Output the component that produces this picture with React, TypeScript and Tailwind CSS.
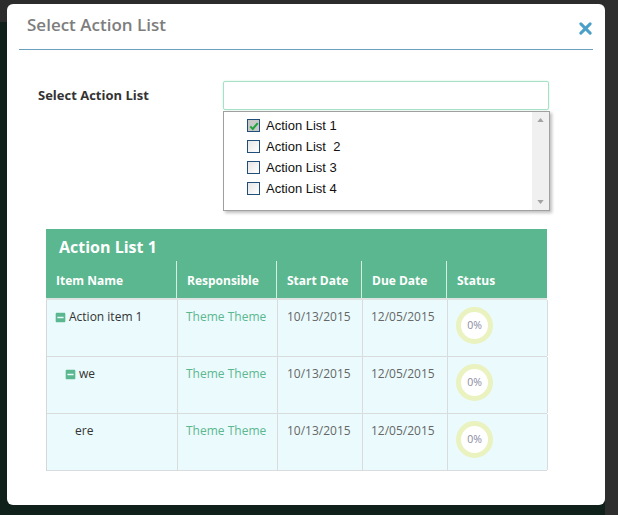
import { FaMinusSquare } from "react-icons/fa";

const lists = ["Action List 1", "Action List  2", "Action List 3", "Action List 4"];

const rows = [
  { name: "Action item 1", indent: 0, icon: true },
  { name: "we", indent: 10, icon: true },
  { name: "ere", indent: 20, icon: false },
];

const Checkbox = ({ checked }: { checked: boolean }) => (
  <span
    className={
      "flex h-[13px] w-[13px] items-center justify-center border border-[#1f4e79] " +
      (checked ? "bg-[#c8c8c8]" : "bg-gradient-to-br from-[#e6e6e6] to-white")
    }
  >
    {checked && (
      <svg viewBox="0 0 12 12" className="h-[10px] w-[10px]">
        <path d="M1.5 6.5 L4.5 9.5 L10.5 2.5" fill="none" stroke="#1fa33a" strokeWidth="2.4" />
      </svg>
    )}
  </span>
);

const Ring = () => (
  <div className="flex h-[37px] w-[37px] items-center justify-center rounded-full border-[5px] border-[#eaf2c0] bg-white">
    <span className="text-[10.5px] text-[#8a8aa0]">0%</span>
  </div>
);

export default function App() {
  return (
    <div className="h-[515px] w-[618px] overflow-hidden bg-[linear-gradient(to_right,transparent_605px,#2e2e2e_605px),linear-gradient(to_bottom,#2c2c2c_0px,#2c2c2c_22px,#10201a_22px)] pl-[7px] pt-[4px] font-['Open_Sans',sans-serif]">
      <div className="h-[501px] w-[598px] rounded-[6px] bg-white">
        {/* Header */}
        <div className="mx-[12px] flex h-[46px] items-center justify-between border-b border-[#6a9fc0] pb-[4px] pl-[8px] pr-[1px]">
          <h2 className="text-[17px] font-semibold text-[#7d7d7d]">Select Action List</h2>
          <svg viewBox="0 0 14 14" className="mt-[7px] h-[13px] w-[13px]">
            <path d="M2 2 L12 12 M12 2 L2 12" stroke="#4c9fc8" strokeWidth="3.2" strokeLinecap="round" />
          </svg>
        </div>

        {/* Select row */}
        <div className="mt-[31px] flex pl-[31px]">
          <div className="flex h-[29px] w-[185px] items-center text-[13px] font-bold text-[#333]">
            Select Action List
          </div>
          <div className="flex flex-col">
            <div className="h-[29px] w-[326px] rounded-[2px] border border-[#a6e0c6] shadow-[0_0_2px_#c6f0dc]" />
            <div className="mt-[1px] flex h-[100px] w-[327px] border border-[#a0a0a0] bg-white shadow-[2px_2px_3px_rgba(0,0,0,0.25)] font-['Liberation_Sans',sans-serif]">
              <div className="flex flex-1 flex-col pl-[23px] pt-[3px]">
                {lists.map((l, i) => (
                  <div key={l} className="flex h-[21px] items-center gap-[6px] text-[13px] text-[#111]">
                    <Checkbox checked={i === 0} />
                    <span className="whitespace-pre">{l}</span>
                  </div>
                ))}
              </div>
              <div className="flex w-[17px] flex-col items-center justify-between bg-[#f0f0f0] py-[6px]">
                <svg viewBox="0 0 8 5" className="h-[4px] w-[7px]">
                  <path d="M0 5 L4 0 L8 5 Z" fill="#a3a3a3" />
                </svg>
                <svg viewBox="0 0 8 5" className="h-[4px] w-[7px]">
                  <path d="M0 0 L4 5 L8 0 Z" fill="#a3a3a3" />
                </svg>
              </div>
            </div>
          </div>
        </div>

        {/* Table */}
        <div className="ml-[39px] mt-[18px] w-[501px]">
          <div className="bg-[#5bb78f]">
            <div className="flex h-[32px] items-end pl-[13px] text-[16px] font-bold text-white">
              <span className="mb-[2px]">Action List 1</span>
            </div>
            <div className="grid h-[39px] grid-cols-[130px_100px_85px_85px_101px] border-b-2 border-[#dfe3e2] text-[12px] font-bold text-white">
              {["Item Name", "Responsible", "Start Date", "Due Date", "Status"].map((h, i) => (
                <div
                  key={h}
                  className={"flex items-center px-[10px] pt-[2px] " + (i > 0 ? "border-l border-[#d6eee2]" : "")}
                >
                  {h}
                </div>
              ))}
            </div>
          </div>
          <div className="border-l border-[#d4d8d8] bg-[#ebfbfd]">
            {rows.map((r) => (
              <div
                key={r.name}
                className="grid h-[57px] grid-cols-[130px_100px_85px_85px_101px] border-b border-[#d8dcdc] text-[12px]"
              >
                <div className="flex items-start pl-[8px] pt-[8px] text-[#333]">
                  <div className="flex items-center gap-[3px]" style={{ marginLeft: r.indent }}>
                    {r.icon && <FaMinusSquare className="h-[11px] w-[11px] text-[#5bb78f]" />}
                    <span>{r.name}</span>
                  </div>
                </div>
                <div className="border-l border-[#d8dcdc] pl-[8px] pt-[8px] text-[#5bb78f]">Theme Theme</div>
                <div className="border-l border-[#d8dcdc] pl-[9px] pt-[8px] text-[#666]">10/13/2015</div>
                <div className="border-l border-[#d8dcdc] pl-[8px] pt-[8px] text-[#666]">12/05/2015</div>
                <div className="border-l border-r border-[#d8dcdc] pl-[8px] pt-[7px]">
                  <Ring />
                </div>
              </div>
            ))}
          </div>
        </div>
      </div>
    </div>
  );
}
